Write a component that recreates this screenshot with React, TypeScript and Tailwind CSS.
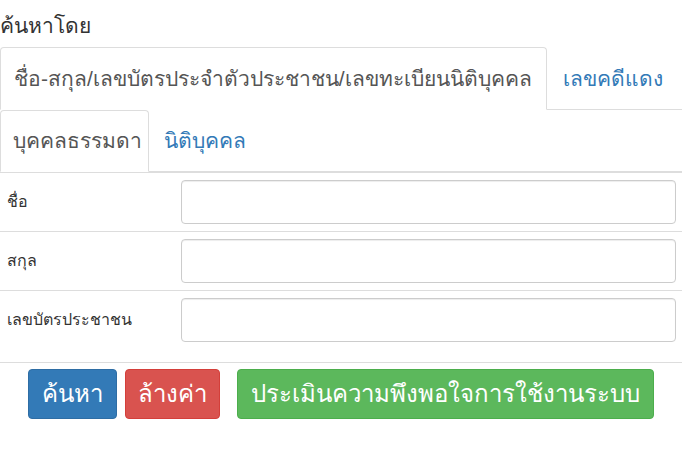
import React from 'react';

const rows = ['ชื่อ', 'สกุล', 'เลขบัตรประชาชน'];

export default function App() {
  return (
    <div className="w-[682px] h-[450px] bg-white text-[#333] font-['Liberation_Sans',sans-serif]">
      <div className="pt-[12px] h-[47px] text-[21px] leading-[28px]">ค้นหาโดย</div>

      {/* main tabs */}
      <ul className="flex border-b border-[#ddd] text-[21px] leading-[28px]">
        <li className="-mb-px">
          <div className="w-[547px] px-[13px] h-[63px] flex items-center border border-[#ddd] border-b-white rounded-t-[4px] text-[#555] bg-white whitespace-nowrap">
            ชื่อ-สกุล/เลขบัตรประจำตัวประชาชน/เลขทะเบียนนิติบุคคล
          </div>
        </li>
        <li className="-mb-px">
          <a className="px-[15px] h-[63px] flex items-center border border-transparent text-[#337ab7]">เลขคดีแดง</a>
        </li>
      </ul>

      {/* sub tabs */}
      <ul className="flex border-b border-[#ddd] text-[21px] leading-[28px]">
        <li className="-mb-px">
          <div className="w-[149px] px-[12px] h-[62px] flex items-center border border-[#ddd] border-b-white rounded-t-[4px] text-[#555] bg-white whitespace-nowrap">
            บุคคลธรรมดา
          </div>
        </li>
        <li className="-mb-px">
          <a className="px-[14px] h-[62px] flex items-center border border-transparent text-[#337ab7]">นิติบุคคล</a>
        </li>
      </ul>

      <table className="w-full border-collapse text-[16px]">
        <tbody>
          {rows.map((r) => (
            <tr key={r}>
              <td className="border-t border-[#ddd] w-[181px] pl-[7px] py-[7px] align-middle">{r}</td>
              <td className="border-t border-[#ddd] pr-[6px] py-[7px]">
                <input
                  type="text"
                  className="block w-full h-[44px] border border-[#ccc] rounded-[4px] px-3 shadow-[inset_0_1px_1px_rgba(0,0,0,0.075)]"
                />
              </td>
            </tr>
          ))}
        </tbody>
      </table>

      <div className="mt-[13px] border-t border-[#ddd] pt-[6px] flex justify-center text-[24px] text-white">
        <button className="h-[50px] px-[13px] bg-[#337ab7] border border-[#2e6da4] rounded-[4px]">ค้นหา</button>
        <button className="ml-[8px] h-[50px] px-[12px] bg-[#d9534f] border border-[#d43f3a] rounded-[4px]">ล้างค่า</button>
        <button className="ml-[17px] h-[50px] px-[13px] bg-[#5cb85c] border border-[#4cae4c] rounded-[4px]">ประเมินความพึงพอใจการใช้งานระบบ</button>
      </div>
    </div>
  );
}
